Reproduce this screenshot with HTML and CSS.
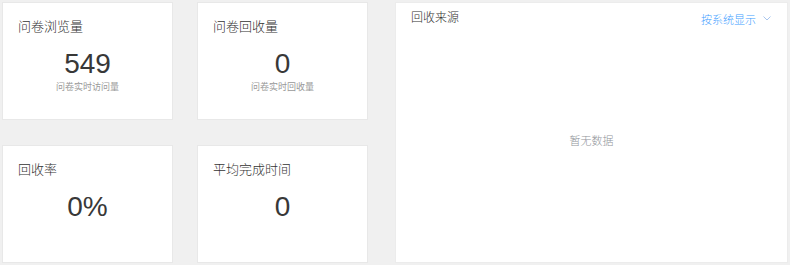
FILE: index.html
```html
<!DOCTYPE html>
<html lang="zh-CN">
<head>
    <meta charset="UTF-8">
    <meta name="viewport" content="width=device-width, initial-scale=1.0">
    <title>问卷统计</title>
    <link rel="stylesheet" href="styles.css">
</head>
<body>
    <main class="stats">
        <section class="cards">
            <div class="card">
                <h3 class="card-title">问卷浏览量</h3>
                <div class="card-value">549</div>
                <div class="card-note">问卷实时访问量</div>
            </div>
            <div class="card">
                <h3 class="card-title">问卷回收量</h3>
                <div class="card-value">0</div>
                <div class="card-note">问卷实时回收量</div>
            </div>
            <div class="card">
                <h3 class="card-title">回收率</h3>
                <div class="card-value">0%</div>
            </div>
            <div class="card">
                <h3 class="card-title">平均完成时间</h3>
                <div class="card-value">0</div>
            </div>
        </section>

        <section class="panel">
            <div class="panel-head">
                <h3 class="panel-title">回收来源</h3>
                <div class="panel-select">
                    <span>按系统显示</span>
                    <svg class="arrow" width="8" height="5" viewBox="0 0 8 5">
                        <path d="M0.5 0.5 L4 4 L7.5 0.5" fill="none" stroke="#a9c6ee" stroke-width="1"/>
                    </svg>
                </div>
            </div>
            <div class="panel-empty">暂无数据</div>
        </section>
    </main>
</body>
</html>
```

FILE: styles.css
```css
body {
    margin: 0;
    padding: 0;
    background: #f0f0f0;
    font-family: "Liberation Sans", "Noto Sans CJK SC", sans-serif;
    color: #333;
}

.stats {
    display: flex;
    gap: 27px;
    padding: 2px 2px 2px 2px;
    height: 261px;
}

.cards {
    display: grid;
    grid-template-columns: 171px 171px;
    grid-template-rows: 118px 118px;
    column-gap: 24px;
    row-gap: 25px;
}

.card {
    background: #fff;
    border: 1px solid #e8e8e8;
    box-sizing: border-box;
    padding: 15px 15px 0 15px;
}

.card-title {
    margin: 0;
    font-size: 13px;
    font-weight: 300;
    line-height: 17px;
    color: #333;
}

.card-value {
    margin-top: 13px;
    font-size: 28px;
    line-height: 32px;
    text-align: center;
    color: #383838;
}

.card-note {
    margin-top: 1px;
    font-size: 9px;
    line-height: 13px;
    text-align: center;
    color: #999;
}

.panel {
    flex: 1;
    background: #fff;
    border: 1px solid #ececec;
    box-sizing: border-box;
    display: flex;
    flex-direction: column;
}

.panel-head {
    display: flex;
    justify-content: space-between;
    align-items: center;
    padding: 7px 16px 0 15px;
}

.panel-title {
    margin: 0;
    font-size: 12px;
    font-weight: 300;
    line-height: 17px;
    color: #333;
}

.panel-select {
    display: flex;
    align-items: center;
    gap: 7px;
    font-size: 11px;
    font-weight: 300;
    color: #409eff;
}

.panel-empty {
    flex: 1;
    display: flex;
    align-items: center;
    justify-content: center;
    font-size: 11px;
    font-weight: 300;
    color: #909399;
    padding-bottom: 10px;
}
```
